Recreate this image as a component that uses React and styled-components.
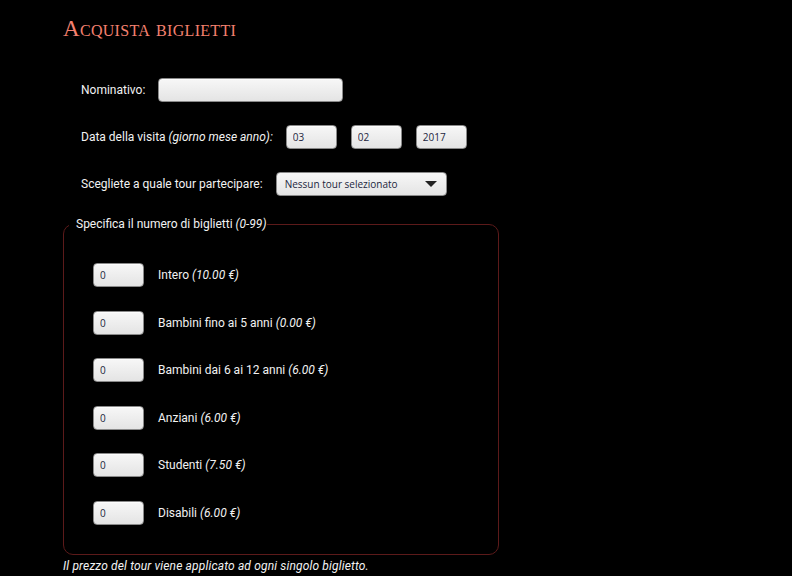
import React from "react";
import styled, { createGlobalStyle } from "styled-components";

const GlobalStyle = createGlobalStyle`
  html, body {
    margin: 0;
    padding: 0;
    background: #000;
  }
  body {
    font-family: Roboto, "Liberation Sans", sans-serif;
    color: #f2f2f2;
  }
`;

const tickets = [
  { id: "intero", name: "Intero", price: "10.00" },
  { id: "bambini5", name: "Bambini fino ai 5 anni", price: "0.00" },
  { id: "bambini12", name: "Bambini dai 6 ai 12 anni", price: "6.00" },
  { id: "anziani", name: "Anziani", price: "6.00" },
  { id: "studenti", name: "Studenti", price: "7.50" },
  { id: "disabili", name: "Disabili", price: "6.00" },
];

export default function App() {
  return (
    <>
      <GlobalStyle />
      <Page>
        <Title>Acquista biglietti</Title>
        <Form>
          <Row>
            <Label>Nominativo:</Label>
            <TextInput width={185} defaultValue="" />
          </Row>
          <Row>
            <Label>
              Data della visita <em>(giorno mese anno):</em>
            </Label>
            <DateGroup>
              <TextInput width={51} defaultValue="03" />
              <TextInput width={51} defaultValue="02" />
              <TextInput width={51} defaultValue="2017" />
            </DateGroup>
          </Row>
          <Row>
            <Label>Scegliete a quale tour partecipare:</Label>
            <SelectWrap>
              <Select defaultValue="none">
                <option value="none">Nessun tour selezionato</option>
              </Select>
            </SelectWrap>
          </Row>
        </Form>
        <Fieldset>
          <Legend>
            Specifica il numero di biglietti <em>(0-99)</em>
          </Legend>
          {tickets.map((t) => (
            <TicketRow key={t.id}>
              <TextInput width={51} defaultValue="0" />
              <TicketLabel>
                {t.name} <em>({t.price} €)</em>
              </TicketLabel>
            </TicketRow>
          ))}
        </Fieldset>
        <Note>Il prezzo del tour viene applicato ad ogni singolo biglietto.</Note>
      </Page>
    </>
  );
}

const Page = styled.div`
  padding: 0 0 0 63px;
  width: 729px;
`;

const Title = styled.h1`
  margin: 0;
  padding-top: 13px;
  height: 32px;
  font-family: "Liberation Serif", serif;
  font-variant: small-caps;
  font-weight: normal;
  font-size: 23px;
  line-height: 32px;
  letter-spacing: 0.3px;
  color: #f4806f;
`;

const Form = styled.div`
  padding: 33px 0 0 18px;
  display: flex;
  flex-direction: column;
  gap: 23px;
`;

const Row = styled.div`
  display: flex;
  align-items: center;
  gap: 13px;
  height: 24px;
  font-size: 12px;
`;

const Label = styled.span`
  em {
    font-style: italic;
  }
`;

const DateGroup = styled.div`
  display: flex;
  gap: 14px;
`;

const TextInput = styled.input`
  box-sizing: border-box;
  width: ${(p) => p.width}px;
  height: 24px;
  padding: 0 6px;
  border: 1px solid #8a8a8a;
  border-radius: 4px;
  background: linear-gradient(#f7f7f7, #e4e4e4);
  box-shadow: inset 0 1px 1px rgba(255, 255, 255, 0.8);
  font-family: "Open Sans", "Liberation Sans", sans-serif;
  font-size: 10px;
  color: #1c2640;
  outline: none;
`;

const SelectWrap = styled.div`
  position: relative;
  width: 171px;
  height: 24px;

  &::after {
    content: "";
    position: absolute;
    right: 10px;
    top: 9px;
    border-left: 6px solid transparent;
    border-right: 6px solid transparent;
    border-top: 6px solid #222;
    pointer-events: none;
  }
`;

const Select = styled.select`
  appearance: none;
  box-sizing: border-box;
  width: 100%;
  height: 24px;
  padding: 0 8px;
  border: 1px solid #8a8a8a;
  border-radius: 4px;
  background: linear-gradient(#f7f7f7, #e4e4e4);
  font-family: "Open Sans", "Liberation Sans", sans-serif;
  font-size: 10px;
  color: #1c2640;
  outline: none;
`;

const Fieldset = styled.fieldset`
  box-sizing: border-box;
  margin: 21px 0 0 0;
  width: 436px;
  padding: 32px 0 29px 29px;
  border: 1px solid #5c1a1a;
  border-radius: 10px;
  display: flex;
  flex-direction: column;
  gap: 23.5px;
`;

const Legend = styled.legend`
  margin-left: -24px;
  padding: 0 1px 0 7px;
  font-size: 12px;
  line-height: 14px;

  em {
    font-style: italic;
  }
`;

const TicketRow = styled.div`
  display: flex;
  align-items: center;
  gap: 14px;
  height: 24px;
  font-size: 12px;
`;

const TicketLabel = styled.span`
  em {
    font-style: italic;
  }
`;

const Note = styled.p`
  margin: 4px 0 0 0;
  font-size: 12px;
  font-style: italic;
  letter-spacing: 0.15px;
`;
